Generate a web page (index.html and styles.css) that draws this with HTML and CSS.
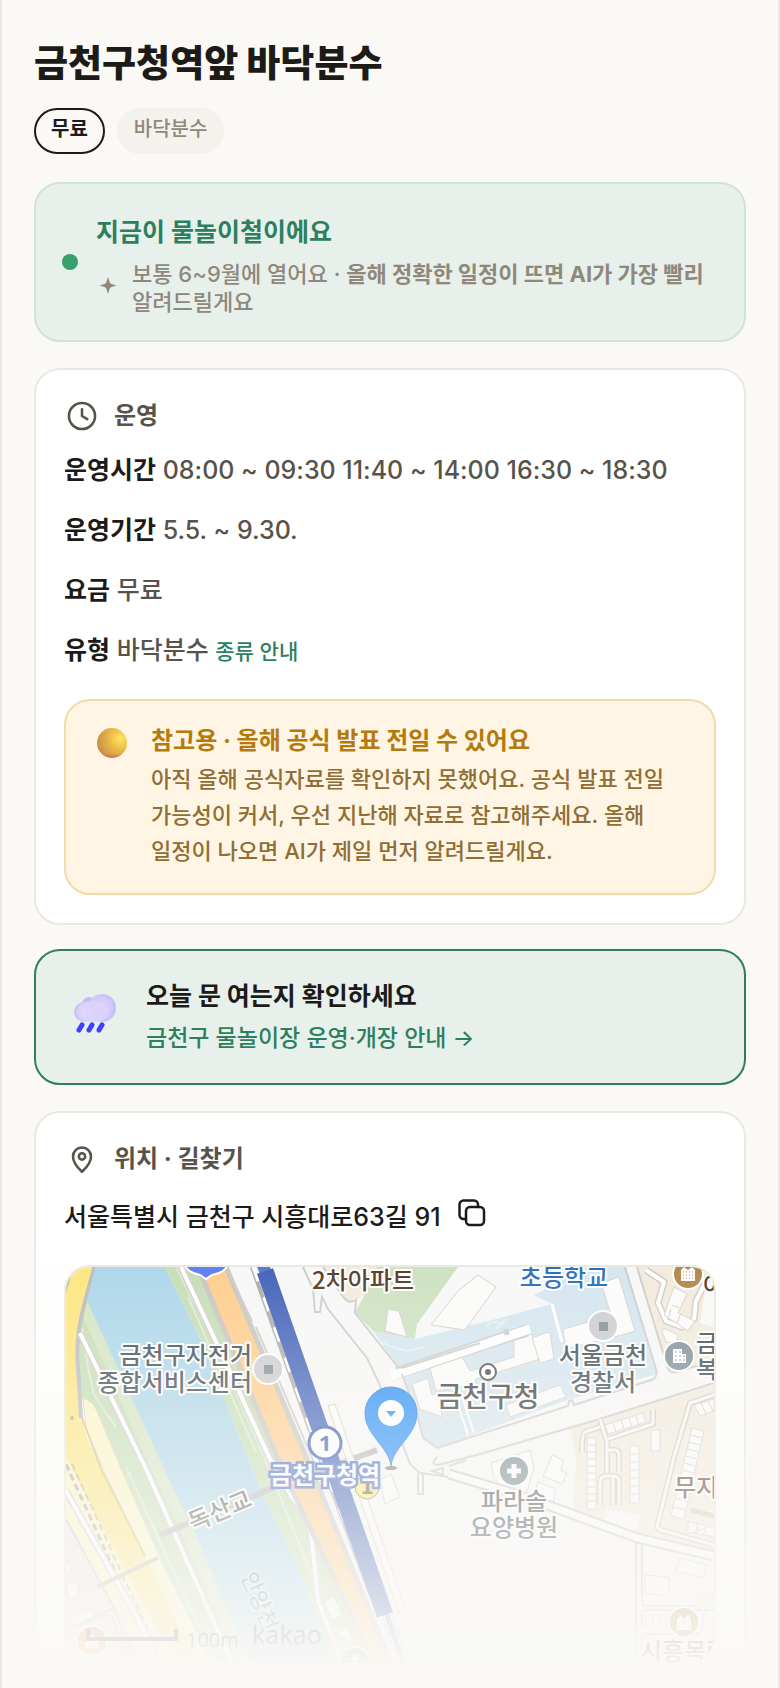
FILE: index.html
```html
<!DOCTYPE html>
<html lang="ko">
<head>
    <meta charset="UTF-8">
    <meta name="viewport" content="width=device-width, initial-scale=1.0">
    <title>금천구청역앞 바닥분수</title>
    <link rel="stylesheet" href="styles.css">
</head>
<body>
    <main class="page">
        <h1>금천구청역앞 바닥분수</h1>
        <div class="tags">
            <span class="tag tag-free">무료</span>
            <span class="tag">바닥분수</span>
        </div>

        <section class="status">
            <span class="status-dot"></span>
            <div class="status-body">
                <h2>지금이 물놀이철이에요</h2>
                <div class="status-note">
                    <svg class="spark" viewBox="0 0 24 24" aria-hidden="true"><path d="M12 1L13.800 6.500 14.800 7.700 20.500 9.500 14.800 11.300 13.800 12.500 12 18 10.200 12.500 9.200 11.300 3.500 9.500 9.200 7.700 10.200 6.500Z" fill="#8f887b"/></svg>
                    <p>보통 6~9월에 열어요 · <strong>올해 정확한 일정이 뜨면 AI가 가장 빨리</strong> 알려드릴게요</p>
                </div>
            </div>
        </section>

        <section class="card">
            <h2 class="card-title">
                <svg class="icon" viewBox="0 0 24 24" aria-hidden="true"><circle cx="12" cy="12" r="8.700"/><path d="M12 7.500V12l3.500 2.100"/></svg>
                운영
            </h2>
            <div class="info">
                <p><strong>운영시간</strong> 08:00 ~ 09:30 11:40 ~ 14:00 16:30 ~ 18:30</p>
                <p><strong>운영기간</strong> 5.5. ~ 9.30.</p>
                <p><strong>요금</strong> 무료</p>
                <p><strong>유형</strong> 바닥분수 <a href="#types">종류 안내</a></p>
            </div>
            <div class="notice">
                <svg class="notice-icon" viewBox="0 0 36 36" aria-hidden="true">
                    <defs>
                        <radialGradient id="ball" cx="0.78" cy="0.35" r="0.8">
                            <stop offset="0" stop-color="#ffe75f"/>
                            <stop offset="0.5" stop-color="#e9b647"/>
                            <stop offset="0.9" stop-color="#cf9747"/>
                            <stop offset="1" stop-color="#c98a55"/>
                        </radialGradient>
                        <linearGradient id="ballShade" x1="0" y1="0" x2="0" y2="1">
                            <stop offset="0.86" stop-color="#d0705f" stop-opacity="0"/>
                            <stop offset="1" stop-color="#d0705f"/>
                        </linearGradient>
                    </defs>
                    <circle cx="18" cy="18" r="15" fill="url(#ball)"/>
                    <circle cx="18" cy="18" r="15" fill="url(#ballShade)"/>
                </svg>
                <div>
                    <h3>참고용 · 올해 공식 발표 전일 수 있어요</h3>
                    <p>아직 올해 공식자료를 확인하지 못했어요. 공식 발표 전일 가능성이 커서, 우선 지난해 자료로 참고해주세요. 올해 일정이 나오면 AI가 제일 먼저 알려드릴게요.</p>
                </div>
            </div>
        </section>

        <a class="check" href="#notice">
            <svg class="check-icon" viewBox="0 0 60 60" aria-hidden="true">
                <defs>
                    <radialGradient id="cloudA" cx="0.42" cy="0.5" r="0.62">
                        <stop offset="0" stop-color="#dcd3fb"/>
                        <stop offset="0.65" stop-color="#d3c9fa"/>
                        <stop offset="1" stop-color="#c2b9f7"/>
                    </radialGradient>
                    <radialGradient id="cloudB" cx="0.62" cy="0.5" r="0.62">
                        <stop offset="0" stop-color="#e6defd"/>
                        <stop offset="0.6" stop-color="#dcd3fb"/>
                        <stop offset="1" stop-color="#c4bbf7"/>
                    </radialGradient>
                </defs>
                <circle cx="25" cy="17" r="7" fill="#c4baf8"/>
                <circle cx="38" cy="21" r="14" fill="url(#cloudA)"/>
                <circle cx="20" cy="25" r="10" fill="url(#cloudB)"/>
                <path d="M20 16C26 12 42 14 44 21 46 28 41 34 34 35H20Z" fill="#dcd3fb" opacity="0.8"/>
                <path d="M18 38l-3 5M28 38l-3 5M38 38l-3 5" stroke="#3c42ff" stroke-width="5" stroke-linecap="round"/>
            </svg>
            <span class="check-text">
                <strong>오늘 문 여는지 확인하세요</strong>
                <span>금천구 물놀이장 운영·개장 안내 →</span>
            </span>
        </a>

        <section class="card">
            <h2 class="card-title">
                <svg class="icon" viewBox="0 0 24 24" aria-hidden="true"><path d="M12 20.500C8.500 17.300 6 14 6 10.300a6 6 0 0 1 12 0C18 14 15.500 17.300 12 20.500Z"/><circle cx="12" cy="10.300" r="2.100"/></svg>
                위치 · 길찾기
            </h2>
            <div class="address">
                <p>서울특별시 금천구 시흥대로63길 91</p>
                <button class="copy" type="button" aria-label="주소 복사">
                    <svg viewBox="0 0 30 30" aria-hidden="true"><rect x="9" y="9" width="18" height="18" rx="4"/><path d="M9 21H6.500A4 4 0 0 1 2.500 17V6.500A4 4 0 0 1 6.500 2.500H17A4 4 0 0 1 21 6.500V9"/></svg>
                </button>
            </div>
            <div class="map">
                <svg viewBox="0 0 648 396" role="img" aria-label="금천구청역앞 바닥분수 지도">
                    <rect width="648" height="396" fill="#f7f7f7"/>

                    <!-- west bank -->
                    <path d="M0 235L50 340 80 396H0Z" fill="#efe9de"/>
                    <path d="M0 150L150 396H50L0 300Z" fill="#fbf5c4"/>
                    <path d="M0 250L48 341 84 396H0Z" fill="#eeeae2"/>
                    <path d="M27 0L21 34 99 204 131 271 184 396H140L94 291 56 204 31 144 14 131 8 74Z" fill="#c4dcb2"/>
                    <path d="M21 34L99 204 131 271 184 396H172L120 275 86 204 17 50Z" fill="#d2e4c0"/>
                    <path d="M16 60L22 100 28 128 50 160M60 200L110 310 150 396" class="trail"/>
                    <path d="M17 131Q27 134 31 144L56 204 94 291 146 396H110L60 270 20 160Z" fill="#fcf6c3" stroke="#d9d4bb"/>
                    <path d="M16 151L38 204 78 286 40 215 18 165Z" fill="#fff" stroke="#d5d2c8"/>
                    <path d="M0 0H27L11 74 14 151 30 194 79 289 131 396H112L64 314 0 190Z" fill="#fde57c"/>
                    <path d="M16 151L36 204 79 289" fill="none" stroke="#d9c46a" stroke-width="2"/>
                    <path d="M0 26L6 6 0 8Z" class="case-fill"/>
                    <path d="M29 -2L18 38Q9 74 12 100L15 151" fill="none" stroke="#b9b9b9" stroke-width="4"/>
                    <circle cx="6" cy="151" r="2" fill="#aaa"/>
                    <path d="M0 197L61 331 92 396" fill="none" stroke="#aaa" stroke-width="3" stroke-dasharray="7 4"/>
                    <path d="M6 197L67 331 98 396" fill="none" stroke="#c4b98b" stroke-width="2" stroke-dasharray="7 4"/>
                    <path d="M0 224L72 352 92 396" class="road-case"/>
                    <path d="M0 224L72 352 92 396" class="road"/>
                    <path d="M0 252L48 341 0 365M48 341L70 396" fill="none" stroke="#c9c9c9" stroke-width="2"/>
                    <path d="M0 290L6 305 0 310ZM0 318L10 314 14 328 4 332Z" class="house"/>
                    <path d="M4 350L26 341 28 350 6 359Z" class="house"/>
                    <path d="M36 352Q40 346 46 349L64 396" fill="none" stroke="#ccc" stroke-width="2"/>

                    <!-- river -->
                    <path d="M29 0H99L134 71 187 204 224 284 271 396H184L131 271 99 204 21 34Z" fill="#aad5e9"/>
                    <path d="M99 0H150L217 197 314 396H271L224 284 187 204 134 71Z" fill="#c4dcb2"/>
                    <path d="M110 0L146 71 198 190 236 284 282 396M122 30L190 185" class="trail"/>

                    <path d="M14 66L81 204 166 396" class="road-case"/>
                    <path d="M14 66L81 204 166 396" class="road"/>
                    <path d="M115 0L160 96 204 192 226 230Q244 252 246 274L252 334 276 396" class="road-case"/>
                    <path d="M115 0L160 96 204 192 226 230Q244 252 246 274L252 334 276 396" class="road"/>
                    <path d="M258 335L268 330 276 348 266 352ZM271 366L281 361 288 376" class="house"/>

                    <!-- bridges -->
                    <path d="M94 268L204 222 311 183" fill="none" stroke="#b4b4b4" stroke-width="6"/>
                    <path d="M31 320L92 291" fill="none" stroke="#bdb8ae" stroke-width="4"/>

                    <!-- expressway -->
                    <path d="M134 0H158L247 206 328 396H304L217 204Z" fill="#ffcb88"/>
                    <path d="M132 0L217 204 308 396M160 0L247 206 325 396" fill="none" stroke="#c6c3bd" stroke-width="5"/>
                    <path d="M162 4L186 54M190 60L250 200" class="line"/>

                    <!-- railway -->
                    <path d="M186 0L237 144 266 224 304 327" fill="none" stroke="#a9a9a9" stroke-width="4"/>
                    <path d="M187 0L238 144 267 224 305 327" fill="none" stroke="#fff" stroke-width="3" stroke-dasharray="15 17"/>
                    <path d="M262 139L269 137 340 344 333 346Z" class="house"/>
                    <path d="M320 345L337 396" stroke="#c3c9e4" stroke-width="10"/>
                    <path d="M320 345L337 396" stroke="#fff" stroke-width="8"/>
                    <path d="M320 345L337 396" stroke="#93a2d3" stroke-width="5"/>
                    <path d="M196 -4L200 6" stroke="#4c77c9" stroke-width="12"/>
                    <path d="M199 4L319 348" stroke="#3c5db6" stroke-width="17"/>

                    <!-- park and civic blocks -->
                    <path d="M257 0H316L299 27 290 33Q283 37 278 31L262 8Z" fill="#f3eadb"/>
                    <path d="M310 0H392L351 57 349 72 307 64 289 46 299 27Z" fill="#cce0bf"/>
                    <path d="M322 42L333 44 341 70 319 64Z" class="house"/>
                    <path d="M307 64L349 72 434 51 486 37 468 28 484 20V0H559L591 107 504 132 371 181 357 171 352 151 336 107 331 99Z" fill="#d3e5ef"/>
                    <path d="M312 78Q318 74 326 80L340 84 358 80M421 60Q424 52 434 56M430 62L440 52" class="trail"/>
                    <path d="M390 132L402 168M396 130L408 166" stroke="#fff" stroke-width="2"/>
                    <path d="M486 37L496 75" stroke="#fff" stroke-width="3"/>
                    <path d="M412 8L430 20 399 63 365 58 392 24Z" class="house"/>
                    <path d="M346 117L362 111 366 128 372 126 376 150 354 142Z" class="house"/>
                    <path d="M364 101L396 90 404 104 448 90 448 73 466 67 474 92 410 112 408 118 370 124Z" class="house"/>
                    <path d="M484 66L488 92 474 96 466 71 482 65Z" class="house"/>
                    <path d="M535 16L553 10 569 64 556 68 500 82 497 62 530 53 545 48Z" class="house"/>
                    <path d="M440 138L494 118 500 130 444 150Z" class="house"/>
                    <path d="M331 106L440 70 461 64" fill="none" stroke="#cbcbcb" stroke-width="12"/>
                    <path d="M325 109L440 70 464 62" fill="none" stroke="#fff" stroke-width="9"/>
                    <path d="M441 68L440 62" stroke="#cbcbcb" stroke-width="5"/>
                    <path d="M237 0L247 22 249 45H254L256 30 262 42 301 91 312 114 330 160 344 197 354 206 384 210 427 224 484 239" class="line"/>
                    <path d="M257 0L278 31Q283 37 290 33L289 46 331 99Q336 102 342 99L414 76M336 107L352 151 357 171 371 181 502 139 503 134 506 133 508 138 588 112Q592 108 590 102L559 0" class="line"/>

                    <!-- apartment blocks -->
                    <path d="M571 0H648V94L606 106 600 100Z" fill="#f2eadb"/>
                    <path d="M640 15L648 10V60L634 56Z" fill="#f8f8f8"/>
                    <path d="M504 160L527 154 648 117V292L571 272 507 249 510 194Z" fill="#f2eadd"/>
                    <path d="M571 0L601 99Q603 107 610 105L648 94" class="line"/>
                    <path d="M371 190Q362 200 376 197L414 187 527 154 648 116" class="line"/>
                    <path d="M580 3L598 15 592 36 600 54 616 60 628 52 630 34 642 10" fill="none" stroke="#cfcac1" stroke-width="7"/>
                    <path d="M580 3L598 15 592 36 600 54 616 60 628 52 630 34 642 10" fill="none" stroke="#fff" stroke-width="4"/>
                    <path d="M608 20L621 27 612 46 629 54 622 64 598 48Z" class="house"/>
                    <path d="M606 38L613 41M605 42L603 50M615 46L611 56" class="line-thin"/>
                    <path d="M596 65Q596 61 600 62L612 68 610 76 600 75Z" class="house"/>
                    <path d="M534 152L541 175 541 212M542 172L587 157V142M541 183H549Q553 183 553 189V205M534 160L519 165Q516 166 516 186" class="lane-case"/>
                    <path d="M534 152L541 175 541 212M542 172L587 157V142M541 183H549Q553 183 553 189V205M534 160L519 165Q516 166 516 186" class="lane"/>
                    <path d="M539 158L577 146 580 155 542 167Z" class="house"/>
                    <path d="M547 156L550 165M555 153L558 162M563 151L566 160M570 149L573 158" class="line-thin"/>
                    <path d="M521 171H530V242H521ZM564 179H573V236H564ZM585 163H594V184H585Z" class="house"/>
                    <path d="M521 178H530M521 185H530M521 192H530M521 199H530M521 206H530M521 213H530M521 220H530M521 227H530M521 234H530M564 187H573M564 195H573M564 203H573M564 211H573M564 219H573M564 227H573" class="line-thin"/>
                    <path d="M541 209H548Q553 209 553 215V238M541 209Q534 209 534 215V238M547 209V238" class="lane-case"/>
                    <path d="M541 209H548Q553 209 553 215V238M541 209Q534 209 534 215V238M547 209V238" class="lane"/>
                    <path d="M648 128L624 136 608 190 592 256Q590 263 598 264L648 278" class="lane-case"/>
                    <path d="M648 128L624 136 608 190 592 256Q590 263 598 264L648 278" class="lane"/>
                    <path d="M626 161L638 164 618 252 605 249Z" class="house"/>
                    <path d="M625 168L636 171M623 175L634 178M621 182L633 185M620 189L631 192M618 196L629 199M616 203L628 206M614 210L626 213M613 217L625 220M611 224L623 227M609 231L621 234M607 240L620 243" class="line-thin"/>
                    <path d="M628 138L648 132V144L634 149Z" class="house"/>
                    <path d="M635 136L640 147M642 134L647 144" class="line-thin"/>
                    <path d="M622 254L648 261V270L622 265ZM632 257L629 266 640 260 637 269" class="house"/>
                    <path d="M625 243L648 249" stroke="#cfcac1" stroke-width="5"/>
                    <path d="M540 242L575 248 569 272 538 256Z" fill="#f8f8f8"/>
                    <path d="M486 188L497 193 495 204 501 206 496 217 477 209ZM472 215L490 222 487 236 468 230Z" class="house"/>
                    <path d="M425 196L444 190 464 183 468 200 460 228 440 224 428 212Z" class="house"/>
                    <path d="M314 213L325 207 334 230 319 237Z" class="house"/>
                    <path d="M352 206V227H357V206M366 204L377 201V208ZM383 199L400 193" class="line"/>
                    <path d="M383 207L440 224 484 239 571 271 648 289" fill="none" stroke="#cbcbcb" stroke-width="11"/>
                    <path d="M383 207L440 224 484 239 571 271 648 289" fill="none" stroke="#fbfbfb" stroke-width="7"/>

                    <path d="M570 275V396M576 276V335Q576 339 580 339H630L636 343H648M576 360V347Q576 343 580 343H634M576 396V372Q577 367 582 367H630Q638 364 638 345" class="line"/>
                    <path d="M614 291L641 298 638 311 610 304ZM579 308L603 310V328L579 327ZM580 348H606V360H580Z" class="house"/>
                    <path d="M587 348V360M594 348V360M601 348V360" class="line-thin"/>
                    <path d="M625 332L634 325H648V340H630Z" fill="#f2eadd"/>

                    <!-- places -->
                    <path d="M118 -2Q123 6 134 8L140 12 146 8Q158 6 162 -2Z" fill="#557af0" stroke="#fff" stroke-width="2"/>
                    <g stroke="#fff" stroke-width="2">
                        <circle cx="202" cy="102" r="15" fill="#cbcbce"/>
                        <circle cx="537" cy="59" r="15" fill="#cbcbce"/>
                        <circle cx="613" cy="89" r="15" fill="#7b8b94"/>
                        <circle cx="622" cy="7" r="15" fill="#ad8343"/>
                        <circle cx="448" cy="204" r="15" fill="#71848c"/>
                        <circle cx="618" cy="355" r="15" fill="#b98e50"/>
                        <circle cx="26" cy="374" r="15" fill="#ef8d4e"/>
                        <circle cx="289" cy="395" r="15" fill="#74b36f"/>
                    </g>
                    <path d="M198 98H207V107H198ZM533 55H542V64H533Z" fill="#7e8b92"/>
                    <path d="M607 82H616V87H620V96H607ZM615 3L618 0 622 3 626 0 629 3V14H615ZM611 352L615 348 618 352 622 348 625 352V363H611Z" fill="#fff"/>
                    <path d="M609 85H615M609 89H619M609 93H619" stroke="#7b8b94" stroke-width="1" stroke-dasharray="2 2"/>
                    <path d="M617 5H628M617 8H628M617 11H628M613 354H624M613 357H624M613 360H624" stroke="#ad8343" stroke-width="1" stroke-dasharray="1 2"/>
                    <path d="M441 204H455M448 197V211" stroke="#fff" stroke-width="5"/>
                    <path d="M19 374L26 367 33 374V381H19ZM289 387L295 393H291V396H287V393H283Z" fill="#fff"/>
                    <circle cx="422" cy="105" r="8" fill="#fff" stroke="#444" stroke-width="2"/>
                    <circle cx="422" cy="105" r="3" fill="#444"/>

                    <text class="place" x="186" y="97" text-anchor="end">금천구자전거</text>
                    <text class="place" x="186" y="124" text-anchor="end">종합서비스센터</text>
                    <text class="place apartment" x="246" y="22">2차아파트</text>
                    <text class="place school" x="498" y="19" text-anchor="middle">초등학교</text>
                    <text class="place apartment" x="637" y="27">아</text>
                    <text class="place" x="537" y="97" text-anchor="middle">서울금천</text>
                    <text class="place" x="537" y="124" text-anchor="middle">경찰서</text>
                    <text class="place" x="630" y="85">금빛</text>
                    <text class="place" x="630" y="111">복지관</text>
                    <text class="place office" x="422" y="140" text-anchor="middle">금천구청</text>
                    <text class="place" x="448" y="243" text-anchor="middle">파라솔</text>
                    <text class="place" x="448" y="269" text-anchor="middle">요양병원</text>
                    <text class="place apartment" x="608" y="229">무지개</text>
                    <text class="place apartment" x="574" y="393">시흥목련</text>
                    <text class="place bridge" transform="translate(154 244) rotate(-23)" text-anchor="middle" y="8">독산교</text>
                    <text class="place river" transform="translate(194 334) rotate(67)" text-anchor="middle" y="8">안양천</text>

                    <circle cx="301" cy="220" r="12" fill="#f8ed78" stroke="#8a7668" stroke-width="1"/>
                    <text class="exit" x="301" y="227" text-anchor="middle">1</text>
                    <circle cx="259" cy="176" r="16" fill="#fff" stroke="#2f53b4" stroke-width="3"/>
                    <text class="line-no" x="259" y="184" text-anchor="middle">1</text>
                    <text class="station" x="259" y="217" text-anchor="middle">금천구청역</text>

                    <ellipse cx="325" cy="201" rx="6" ry="2" fill="#777"/>
                    <path d="M325 199C323 180 299 168 299 146A26 26 0 0 1 351 146C351 168 327 180 325 199Z" fill="#208af8" stroke="#2374d8" stroke-width="1"/>
                    <circle cx="325" cy="146" r="13" fill="#fff"/>
                    <path d="M320 144H330L325 150Z" fill="#208af8"/>

                    <path d="M22 362V372H110V362" fill="none" stroke="#333" stroke-width="4"/>
                    <text class="scale" x="120" y="380">100m</text>
                    <text class="brand" x="186" y="377">kakao</text>
                </svg>
            </div>
        </section>
        <div class="fade"></div>
    </main>
</body>
</html>
```
FILE: styles.css
```css
* {
    box-sizing: border-box;
    margin: 0;
    padding: 0;
}

body {
    background-color: #faf9f6;
    color: #1c1b18;
    font-family: Inter, "Noto Sans CJK KR", sans-serif;
    font-size: 24px;
    word-break: keep-all;
}

.page {
    position: relative;
    height: 100vh;
    overflow: hidden;
    padding: 38px 32px 0;
    border-left: 2px solid #e9e7e0;
    border-right: 2px solid #e9e7e0;
}

h1 {
    font-size: 37px;
    font-weight: 800;
    line-height: 52px;
}

.tags {
    display: flex;
    gap: 12px;
    margin: 18px 0 28px;
}

.tag {
    padding: 0 15px 4px;
    border: 2px solid #f3f2ed;
    border-radius: 23px;
    background-color: #f3f2ed;
    color: #8f887b;
    font-size: 20px;
    font-weight: 500;
    line-height: 38px;
}

.tag-free {
    border-color: #1c1b18;
    background-color: transparent;
    color: #1c1b18;
    font-weight: 700;
}

/* Season status */
.status {
    display: flex;
    align-items: center;
    gap: 18px;
    padding: 24px 26px;
    margin-bottom: 26px;
    border: 2px solid #cfe4d8;
    border-radius: 26px;
    background-color: #e8f0eb;
}

.status-dot {
    flex: none;
    width: 16px;
    height: 16px;
    border-radius: 50%;
    background-color: #35a06b;
}

.status h2 {
    color: #2d7f5e;
    font-size: 25px;
    font-weight: 700;
    line-height: 48px;
}

.status-note {
    display: flex;
    align-items: center;
    gap: 12px;
    margin-top: 4px;
    color: #8f887b;
    font-size: 22px;
    font-weight: 500;
    line-height: 28px;
}

.spark {
    flex: none;
    width: 24px;
    height: 24px;
}

/* Cards */
.card {
    padding: 28px;
    margin-bottom: 24px;
    border: 2px solid #eae8e1;
    border-radius: 26px;
    background-color: #ffffff;
}

.card-title {
    display: flex;
    align-items: center;
    gap: 14px;
    color: #57534a;
    font-size: 24px;
    font-weight: 700;
    line-height: 36px;
}

.icon {
    width: 36px;
    height: 36px;
    fill: none;
    stroke: #57534a;
    stroke-width: 1.7;
    stroke-linecap: round;
    stroke-linejoin: round;
}

.info {
    display: grid;
    gap: 16px;
    margin: 14px 0 25px;
    color: #57534a;
    font-size: 25px;
    font-weight: 500;
    line-height: 44px;
}

.info strong {
    color: #1c1b18;
    font-weight: 700;
}

.info a {
    color: #2d7f5e;
    font-size: 21px;
    text-decoration: none;
}

.notice {
    display: flex;
    gap: 21px;
    padding: 24px 28px;
    border: 2px solid #f0dca6;
    border-radius: 26px;
    background-color: #fff5e4;
}

.notice-icon {
    flex: none;
    width: 36px;
    height: 36px;
}

.notice h3 {
    color: #b57a0c;
    font-size: 24px;
    font-weight: 700;
    line-height: 32px;
}

.notice p {
    margin-top: 4px;
    color: #8f6d33;
    font-size: 22px;
    font-weight: 500;
    line-height: 36px;
}

.check {
    display: flex;
    align-items: center;
    gap: 22px;
    padding: 24px 28px;
    margin-bottom: 26px;
    border: 2px solid #2d7f5e;
    border-radius: 26px;
    background-color: #e8f0eb;
    color: #2d7f5e;
    text-decoration: none;
}

.check-icon {
    flex: none;
    width: 60px;
    height: 60px;
}

.check-text {
    display: flex;
    flex-direction: column;
    font-size: 23px;
    font-weight: 500;
    line-height: 42px;
}

.check-text strong {
    color: #1c1b18;
    font-size: 25px;
    font-weight: 700;
}

/* Location */
.address {
    display: flex;
    align-items: flex-start;
    gap: 16px;
    margin: 18px 0 26px;
    font-size: 25px;
    font-weight: 500;
    line-height: 44px;
}

.copy {
    width: 30px;
    height: 36px;
    border: none;
    background: none;
    cursor: pointer;
}

.copy svg {
    display: block;
    width: 30px;
    height: 30px;
    fill: none;
    stroke: #1c1b18;
    stroke-width: 2.5;
    stroke-linecap: round;
}

.map {
    overflow: hidden;
    border: 2px solid #eae8e1;
    border-bottom: none;
    border-radius: 26px;
}

.map svg {
    display: block;
    width: 100%;
}

.fade {
    position: absolute;
    left: -2px;
    right: -2px;
    bottom: 0;
    height: 448px;
    background: linear-gradient(rgba(250, 249, 246, 0), #faf9f6 98%);
    pointer-events: none;
}

/* Map drawing */
.road-case {
    fill: none;
    stroke: #cdcdcd;
    stroke-width: 7;
}

.road {
    fill: none;
    stroke: #ffffff;
    stroke-width: 4;
}

.lane-case {
    fill: none;
    stroke: #cfcac1;
    stroke-width: 6;
}

.lane {
    fill: none;
    stroke: #f9f7f2;
    stroke-width: 3;
}

.line {
    fill: none;
    stroke: #cbcbcb;
    stroke-width: 2;
}

.line-thin {
    fill: none;
    stroke: #d2cdc4;
    stroke-width: 1;
}

.trail {
    fill: none;
    stroke: #ffffff;
    stroke-width: 2;
    opacity: 0.4;
}

.house {
    fill: #fbfbfa;
    stroke: #d2cfc9;
    stroke-width: 1;
}

.case-fill {
    fill: #b9b9b9;
}

.place {
    fill: #37454c;
    stroke: #ffffff;
    stroke-width: 4px;
    stroke-linejoin: round;
    paint-order: stroke;
    font-family: "Noto Sans CJK KR", sans-serif;
    font-size: 24px;
    font-weight: 500;
}

.apartment {
    fill: #4f3220;
}

.school {
    fill: #1c69b8;
}

.office {
    fill: #333333;
    font-size: 28px;
}

.bridge {
    fill: #555555;
}

.river {
    fill: #4b8497;
    stroke: #cfe6f0;
    font-size: 22px;
    font-weight: 400;
}

.station {
    fill: #ffffff;
    stroke: #4467c4;
    stroke-width: 5px;
    paint-order: stroke;
    font-family: "Noto Sans CJK KR", sans-serif;
    font-size: 24px;
    font-weight: 700;
}

.line-no {
    fill: #2f53b4;
    font-family: "Noto Sans", sans-serif;
    font-size: 22px;
    font-weight: 700;
}

.exit {
    fill: #6d5648;
    font-family: "DejaVu Sans", sans-serif;
    font-size: 19px;
    font-weight: 700;
}

.scale {
    fill: #444444;
    font-family: "Open Sans", sans-serif;
    font-size: 20px;
}

.brand {
    fill: #444444;
    font-family: "Noto Sans", sans-serif;
    font-size: 25px;
}
```
